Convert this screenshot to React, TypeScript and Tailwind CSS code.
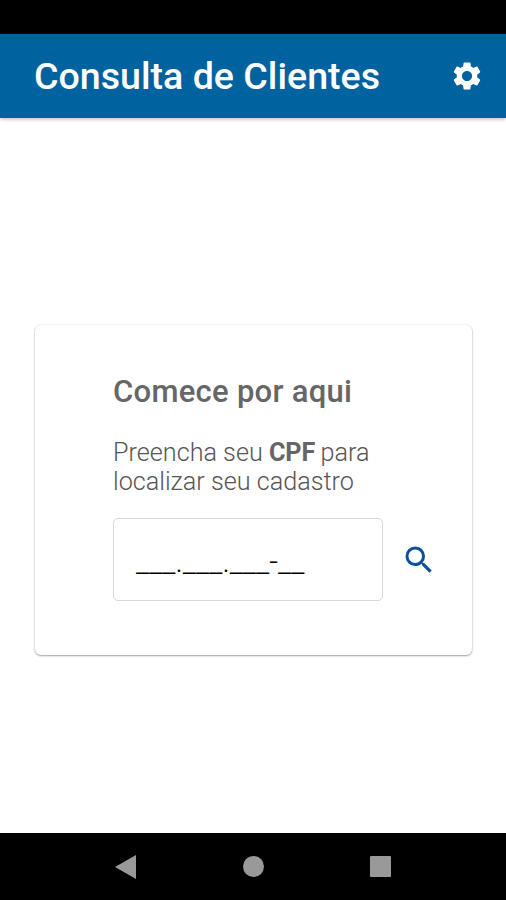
import { MdSettings, MdSearch } from "react-icons/md";

export default function App() {
  return (
    <div className="flex h-[900px] w-[506px] flex-col overflow-hidden bg-white font-['Roboto',sans-serif]">
      <div className="h-[34px] shrink-0 bg-black" />
      <header className="flex h-[84px] shrink-0 items-center justify-between bg-[#00629e] pr-[22px] pl-[34px] text-white shadow-[0_1px_4px_rgba(0,0,0,0.3)]">
        <h1 className="pt-px text-[37.6px] leading-none font-medium whitespace-nowrap">Consulta de Clientes</h1>
        <MdSettings className="size-[34px]" />
      </header>
      <main className="flex flex-1 flex-col px-[35px] pt-[207px]">
        <section className="h-[330px] w-[437px] rounded-[6px] bg-white pt-[49px] pl-[78px] text-[#666] shadow-[0_1px_2px_rgba(0,0,0,0.35),0_0_2px_rgba(0,0,0,0.12)]">
          <h2 className="text-[31px] leading-[36px] font-medium tracking-[0.28px] whitespace-nowrap">Comece por aqui</h2>
          <p className="mt-[28px] text-[25.2px] leading-[29px] font-light whitespace-nowrap text-[#555]">
            Preencha seu <b className="font-bold text-[#666]">CPF</b><span className="-ml-px"> para</span>
            <br />
            localizar seu cadastro
          </p>
          <div className="mt-[22px] flex items-center">
            <div className="flex h-[83px] w-[270px] items-center rounded-[5px] border border-[#d8d8d8] pt-[5px] pl-[22px] text-[30.5px] leading-none font-light text-black">
              ___.___.___-__
            </div>
            <MdSearch className="ml-[18px] size-[36px] text-[#0b4f9e]" />
          </div>
        </section>
      </main>
      <nav className="flex h-[67px] shrink-0 items-center justify-between bg-black pr-[115px] pl-[115px]">
        <svg className="h-[24px] w-[21px]" viewBox="0 0 21 24" fill="#999"><path d="M0 12 21 0v24z" /></svg>
        <svg className="size-[21px]" viewBox="0 0 21 21" fill="#999"><circle cx="10.5" cy="10.5" r="10.5" /></svg>
        <div className="size-[21px] rounded-[1px] bg-[#999]" />
      </nav>
    </div>
  );
}
